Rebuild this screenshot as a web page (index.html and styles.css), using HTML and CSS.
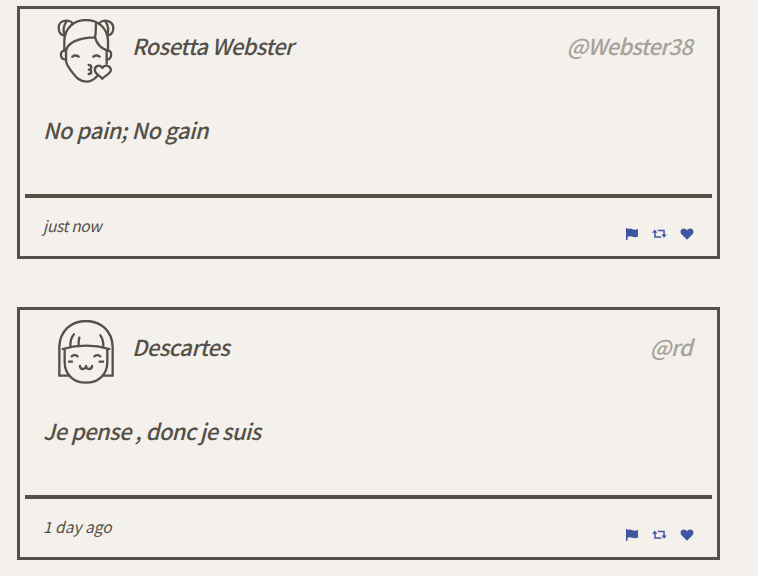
FILE: index.html
```
<!DOCTYPE html>
<html lang="en">
<head>
<meta charset="utf-8">
<title>Tweets</title>
<link rel="stylesheet" href="styles.css">
</head>
<body>
<svg class="sprite" aria-hidden="true">
  <symbol id="flag" viewBox="0 0 14 14"><path d="M1 1h1.500v1q2.500-.9 5 .2 2.500 1 5.500-.3v7.700q-3 1.200-5.500.2-2.500-1-5 0V13H1z"/></symbol>
  <symbol id="retweet" viewBox="0 0 16 14"><path d="M3.200 2.500 6 5.700H4.200V9.200h4.900l1.300 1.500H2.700V5.700H.5zM5.600 2.800h7.700v4.700h2l-2.700 3.300-2.700-3.300h1.900V4.300H6.900z"/></symbol>
  <symbol id="heart" viewBox="0 0 14 14"><path d="M7 12.800 1.700 7.600C-.6 5 .7 1.500 3.700 1.500 5.300 1.500 6.200 2.300 7 3.300 7.800 2.300 8.700 1.500 10.300 1.500c3 0 4.300 3.500 2 6.100z"/></symbol>
</svg>
<main class="tweets">
  <article class="tweet">
    <header class="tweet-header">
      <svg class="avatar" viewBox="12 27 192 192">
        <path d="M43 122V94C43 55 71 30 108 30s66 25 66 64v28M48 128q0-21 25-34 27-12 62-12M48 122v29c0 13 8 20 15 31 15 21 27 33 46 33 15 0 25-8 33-17M138 38l-1 31q-1 7-2 13c5 17 18 33 35 39M170 122v39"/>
        <path d="M45 76C32 77 26 66 26 54 26 42 34 32 48 32c9 0 16 2 20 9M49 35c-8 12-11 24-6 39M148 41c4-7 11-9 19-9 14 0 23 10 23 22 0 13-7 21-18 22M167 35c8 12 10 24 5 39M42 122c-13 1-13 25 5 27M174 122c13 1 13 25-3 27"/>
        <path d="M67 140q9-7 19 0M130 140q9-7 19 0M116 165c11 0 10 13 0 14 11 0 10 13 0 13M157 174c-8-14-26-4-22 9 1 8 15 14 22 23 9-9 22-14 25-23 3-14-17-23-25-9z"/>
      </svg>
      <h2 class="name">Rosetta Webster</h2>
      <span class="handle">@Webster38</span>
    </header>
    <p class="message short">No pain; No gain</p>
    <footer class="tweet-footer">
      <time class="time now">just now</time>
      <div class="actions">
        <svg class="action"><use href="#flag"/></svg>
        <svg class="action wide"><use href="#retweet"/></svg>
        <svg class="action"><use href="#heart"/></svg>
      </div>
    </footer>
  </article>
  <article class="tweet">
    <header class="tweet-header">
      <svg class="avatar" viewBox="12 24 192 192">
        <path d="M55 191H28V104C30 57 63 27 108 27s78 30 80 77v87h-27M38 111q70-20 140 0M44 111v39c0 38 27 62 64 62s64-24 64-62v-39"/>
        <path d="M61 102q0-23 11-35M86 101q-1-13 2-24M160 102q0-20-9-32M65 133q9-7 18 0M133 133q9-7 18 0M57 149h9M149 149h10M90 162c0 12 17 12 18 0 1 12 18 12 18 0"/>
      </svg>
      <h2 class="name">Descartes</h2>
      <span class="handle">@rd</span>
    </header>
    <p class="message">Je pense , donc je suis</p>
    <footer class="tweet-footer">
      <time class="time">1 day ago</time>
      <div class="actions">
        <svg class="action"><use href="#flag"/></svg>
        <svg class="action wide"><use href="#retweet"/></svg>
        <svg class="action"><use href="#heart"/></svg>
      </div>
    </footer>
  </article>
</main>
</body>
</html>
```
FILE: styles.css
```
* { box-sizing: border-box; }

body {
  margin: 0;
  background: #f4f0eb;
  color: #545149;
  font-family: "Source Sans Pro", "Noto Sans CJK SC", sans-serif;
  font-size: 22px;
  font-style: italic;
  font-weight: 500;
  letter-spacing: -0.6px;
}

.sprite { display: none; }

.tweets {
  display: flex;
  flex-direction: column;
  gap: 48px;
  width: 703px;
  margin: 6px 0 0 17px;
}

.tweet {
  display: flex;
  flex-direction: column;
  height: 253px;
  padding: 0 5px;
  border: 3px solid #545149;
}

.tweet-header {
  display: flex;
  align-items: center;
  height: 84px;
  padding: 0 20px 8px 29px;
}

.avatar {
  width: 64px;
  height: 64px;
  margin-top: 8px;
  fill: none;
  stroke: #545149;
  stroke-width: 7;
  stroke-linecap: round;
  stroke-linejoin: round;
}

.name {
  margin: 0 0 4px 14px;
  font-size: 22px;
  font-weight: 500;
  line-height: 36px;
  white-space: nowrap;
}

.handle {
  margin-bottom: 4px;
  margin-left: auto;
  color: #a5a29b;
  letter-spacing: -0.7px;
  line-height: 36px;
}

.message {
  flex: 1;
  margin: 0;
  padding: 18px 18px 0;
  line-height: 36px;
}

.short { letter-spacing: -0.43px; }

.tweet-footer {
  display: flex;
  justify-content: space-between;
  height: 62px;
  padding: 15px 18px 0;
  border-top: 4px solid #545149;
}

.time {
  font-size: 15.5px;
  font-weight: 400;
  letter-spacing: 0;
  line-height: 24px;
}

.now { letter-spacing: -0.35px; }

.actions {
  display: flex;
  gap: 12px;
  padding-top: 14px;
}

.action {
  width: 14px;
  height: 14px;
  fill: #4056a1;
}

.wide { width: 17px; }
```
